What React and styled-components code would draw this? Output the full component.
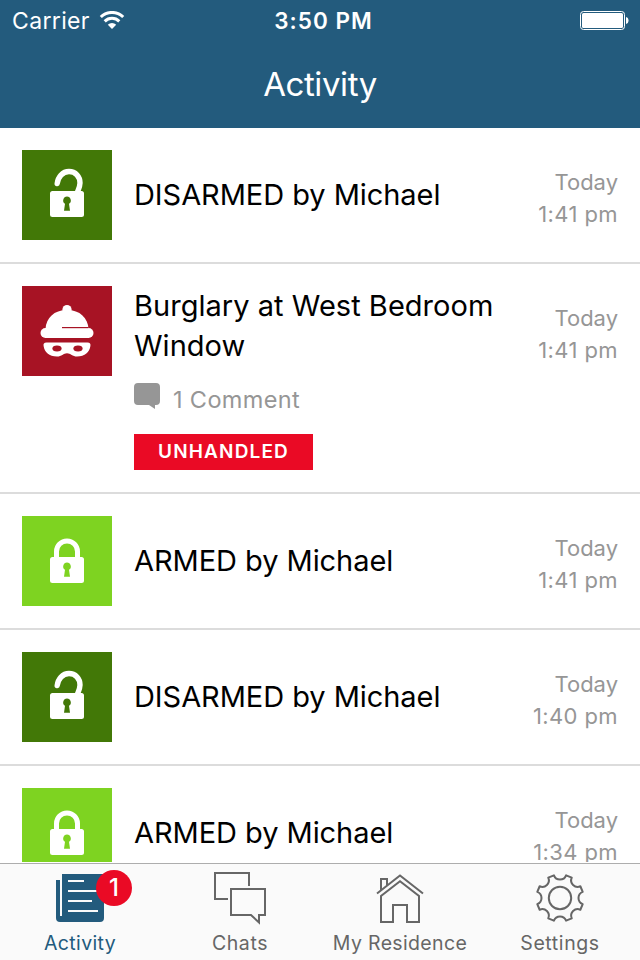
import React from 'react'
import styled, { createGlobalStyle } from 'styled-components';

const GlobalStyle = createGlobalStyle`
  * {
    box-sizing: border-box;
  }

  body {
    margin: 0;
    font-family: Inter, "Liberation Sans", sans-serif;
    background-color: #fff;
  }
`;

export const Screen = styled.div`
  display: flex;
  flex-direction: column;
  width: 640px;
  height: 960px;
  overflow: hidden;
`;

export const Header = styled.header`
  flex: none;
  height: 128px;
  background-color: #235b7d;
  color: #fff;
`;

export const StatusBar = styled.div`
  display: grid;
  grid-template-columns: 1fr auto 1fr;
  align-items: center;
  height: 40px;
  padding: 0 11px 0 12px;
`;

export const Carrier = styled.div`
  display: flex;
  align-items: center;
  gap: 9px;
  padding-top: 1px;
  font-size: 23px;
  letter-spacing: 0.35px;
`;

export const Clock = styled.div`
  padding-left: 6px;
  font-size: 22.5px;
  font-weight: 600;
  letter-spacing: 1px;
`;

export const Battery = styled.svg`
  justify-self: end;
`;

export const Title = styled.h1`
  margin: 0;
  font-size: 33px;
  line-height: 88px;
  font-weight: 400;
  letter-spacing: -0.4px;
  text-align: center;
`;

export const ActivityList = styled.ul`
  flex: 1;
  min-height: 0;
  margin: 0 0 1px;
  padding: 0;
  overflow: hidden;
  list-style: none;
`;

export const Row = styled.li`
  display: flex;
  align-items: flex-start;
  padding: 22px;
  border-bottom: 2px solid #dcdcdc;
`;

export const Tile = styled.div`
  flex: none;
  width: 90px;
  height: 90px;
  background-color: ${(props) => props.$color};

  svg {
    display: block;
  }
`;

export const RowBody = styled.div`
  flex: 1;
  display: flex;
  flex-direction: column;
  justify-content: center;
  align-items: flex-start;
  min-height: 90px;
  padding-left: 22px;
`;

export const RowTitle = styled.div`
  font-size: 29px;
  line-height: 40px;
  letter-spacing: ${(props) => (props.$wrapped ? '0.03px' : '-0.06px')};
  color: #000;
`;

export const Comments = styled.div`
  display: flex;
  align-items: flex-start;
  gap: 13px;
  margin-top: 17px;
  font-size: 23.5px;
  line-height: 34px;
  letter-spacing: 0.35px;
  color: #969696;
`;

export const StateLabel = styled.div`
  width: 179px;
  height: 36px;
  margin-top: 17px;
  background-color: #ea0a25;
  color: #fff;
  font-size: 19px;
  font-weight: 600;
  line-height: 35px;
  letter-spacing: 1.15px;
  text-align: center;
`;

export const Time = styled.div`
  flex: none;
  padding-top: 16px;
  font-size: 22px;
  line-height: 32px;
  letter-spacing: 0.4px;
  text-align: right;
  color: #969696;
`;

export const Day = styled.div`
  letter-spacing: 0;
`;

export const TabBar = styled.nav`
  flex: none;
  display: grid;
  grid-template-columns: repeat(4, 1fr);
  height: 97px;
  border-top: 1px solid #adadad;
  background-color: #fafafa;
`;

export const Tab = styled.div`
  display: flex;
  flex-direction: column;
  align-items: center;
  padding-top: 4px;
  font-size: 19.5px;
  line-height: 26px;
  letter-spacing: ${(props) => props.$spacing || '0.6px'};
  color: ${(props) => (props.$active ? '#235b7d' : '#666')};
`;

export const TabIcon = styled.div`
  position: relative;
  height: 62px;

  svg {
    display: block;
  }
`;

export const Badge = styled.span`
  position: absolute;
  top: 2px;
  left: 46px;
  width: 36px;
  height: 36px;
  border-radius: 50%;
  background-color: #ea0a25;
  color: #fff;
  font-size: 24px;
  font-weight: 500;
  line-height: 36px;
  letter-spacing: 0;
  text-align: center;
`;

const Keyhole = ({ color }) => (
  <path fill={color} d="M45 46.6a3.9 3.9 0 0 1 2 7.2l1 6.9h-6l1-6.9a3.9 3.9 0 0 1 2-7.2z" />
);

const LockOpen = ({ color }) => (
  <svg width="90" height="90" viewBox="0 0 90 90">
    <rect x="28" y="41" width="34" height="26" rx="2.5" fill="#fff" />
    <path
      d="M35.2 33.5C36 27 40.5 21.5 47 21.5c6.5 0 11 5 11 11.5 0 4-1.5 6.5-3 10"
      fill="none"
      stroke="#fff"
      strokeWidth="5.4"
      strokeLinecap="round"
    />
    <Keyhole color={color} />
  </svg>
);

const LockClosed = ({ color }) => (
  <svg width="90" height="90" viewBox="0 0 90 90">
    <rect x="28" y="41" width="34" height="26" rx="2.5" fill="#fff" />
    <path d="M34.5 43v-7.5a10.5 10.5 0 0 1 21 0V43" fill="none" stroke="#fff" strokeWidth="5" />
    <Keyhole color={color} />
  </svg>
);

const Burglar = ({ color }) => (
  <svg width="90" height="90" viewBox="0 0 90 90">
    <circle cx="45" cy="23.5" r="4.6" fill="#fff" />
    <path d="M23.5 43C24 32 32 24 45 24s21 8 21.5 19z" fill="#fff" />
    <rect x="18.5" y="42" width="53" height="10" rx="5" fill="#fff" />
    <path d="M40 41.6h26.5" stroke={color} strokeWidth="1.2" />
    <path
      d="M24.5 56.5h41c2.5 0 3.3 1.5 2.9 3.5-.9 6-5.4 10.5-13.4 10.5-4.5 0-6.500-3.300-10-3.300s-5.500 3.300-10 3.300c-8 0-12.500-4.500-13.400-10.500-.4-2 .4-3.500 2.900-3.500z"
      fill="#fff"
    />
    <ellipse cx="35" cy="62.5" rx="4.600" ry="2.900" fill={color} />
    <ellipse cx="56" cy="62.5" rx="4.600" ry="2.900" fill={color} />
  </svg>
);

const tiles = {
  disarmed: { color: '#427807', Icon: LockOpen },
  armed: { color: '#7ed321', Icon: LockClosed },
  burglary: { color: '#a71324', Icon: Burglar },
};

const WifiIcon = () => (
  <svg width="26" height="19" viewBox="0 0 26 19">
    <g fill="none" stroke="#fff" strokeWidth="3">
      <path d="M1.8 6a16 16 0 0 1 22.4 0" />
      <path d="M5.7 10.3a10.5 10.5 0 0 1 14.6 0" />
    </g>
    <path d="M8.8 13.7a6 6 0 0 1 8.4 0L13 18z" fill="#fff" />
  </svg>
);

const BatteryIcon = () => (
  <Battery width="50" height="20" viewBox="0 0 50 20">
    <rect x="1.5" y="1.5" width="44" height="18" rx="3" fill="none" stroke="#fff" />
    <rect x="3" y="3" width="41" height="15" rx="1.5" fill="#fff" />
    <path d="M47 7c1.500.3 2.500 1.500 2.500 3.500s-1 3.200-2.500 3.500z" fill="#fff" />
  </Battery>
);

const CommentIcon = () => (
  <svg width="26" height="26" viewBox="0 0 26 26">
    <path
      d="M4 0h18a4 4 0 0 1 4 4v14a4 4 0 0 1-4 4h-1v4l-6-4H4a4 4 0 0 1-4-4V4a4 4 0 0 1 4-4z"
      fill="#969696"
    />
  </svg>
);

const ActivityIcon = () => (
  <svg width="60" height="60" viewBox="0 0 60 60">
    <path d="M12 6h42v44a4 4 0 0 1-4 4H10a4 4 0 0 1-4-4V12h4v36h2z" fill="#235b7d" />
    <path d="M18 13h16M18 23h30M18 33h24M18 43h30" stroke="#fafafa" strokeWidth="2" />
  </svg>
);

const ChatsIcon = () => (
  <svg width="60" height="60" viewBox="0 0 60 60" fill="none" stroke="#666" strokeWidth="2">
    <path d="M18 31H5V5h34v13" />
    <path d="M21 21h34v26h-6v7.5L41 47H21z" />
  </svg>
);

const HomeIcon = () => (
  <svg width="60" height="60" viewBox="0 0 60 60" fill="none" stroke="#666" strokeWidth="2">
    <path d="M7 25.5L30 7.5l23 18" />
    <path d="M11 54V28l19-14.8L49 28v26H37V37H23v17z" />
    <path d="M11 22V11h6v6.5" />
  </svg>
);

// Eight teeth, one every 45 degrees, with a round notch cut between them.
const point = (radius, degrees) => {
  const a = (degrees * Math.PI) / 180;
  return `${(30 + radius * Math.sin(a)).toFixed(2)} ${(30 - radius * Math.cos(a)).toFixed(2)}`;
};

const gearPath = [0, 45, 90, 135, 180, 225, 270, 315]
  .map((a, i) => `${i ? 'L' : 'M'}${point(23.5, a - 15)}A6.5 6.5 0 0 0 ${point(23.5, a + 15)}`)
  .join('');

const SettingsIcon = () => (
  <svg width="60" height="60" viewBox="0 0 60 60" fill="none" stroke="#666" strokeWidth="2">
    <path d={`${gearPath}Z`} strokeLinejoin="round" />
    <circle cx="30" cy="30" r="11.2" />
  </svg>
);

const events = [
  { type: 'disarmed', title: ['DISARMED by Michael'], time: '1:41 pm' },
  {
    type: 'burglary',
    title: ['Burglary at West Bedroom', 'Window'],
    time: '1:41 pm',
    comments: '1 Comment',
    state: 'UNHANDLED',
  },
  { type: 'armed', title: ['ARMED by Michael'], time: '1:41 pm' },
  { type: 'disarmed', title: ['DISARMED by Michael'], time: '1:40 pm' },
  { type: 'armed', title: ['ARMED by Michael'], time: '1:34 pm' },
];

const tabs = [
  { name: 'Activity', Icon: ActivityIcon, active: true, badge: 1, spacing: '0.35px' },
  { name: 'Chats', Icon: ChatsIcon },
  { name: 'My Residence', Icon: HomeIcon, spacing: '0.35px' },
  { name: 'Settings', Icon: SettingsIcon },
];

function EventRow({ event }) {
  const { color, Icon } = tiles[event.type];

  return (
    <Row>
      <Tile $color={color}>
        <Icon color={color} />
      </Tile>
      <RowBody>
        {event.title.map((line) => (
          <RowTitle key={line} $wrapped={event.title.length > 1}>{line}</RowTitle>
        ))}
        {event.comments && (
          <Comments>
            <CommentIcon />
            {event.comments}
          </Comments>
        )}
        {event.state && <StateLabel>{event.state}</StateLabel>}
      </RowBody>
      <Time>
        <Day>Today</Day>
        <div>{event.time}</div>
      </Time>
    </Row>
  );
}

function App() {
  return (
    <Screen>
      <GlobalStyle />
      <Header>
        <StatusBar>
          <Carrier>
            Carrier
            <WifiIcon />
          </Carrier>
          <Clock>3:50 PM</Clock>
          <BatteryIcon />
        </StatusBar>
        <Title>Activity</Title>
      </Header>
      <ActivityList>
        {events.map((event, index) => (
          <EventRow key={index} event={event} />
        ))}
      </ActivityList>
      <TabBar>
        {tabs.map(({ name, Icon, active, badge, spacing }) => (
          <Tab key={name} $active={active} $spacing={spacing}>
            <TabIcon>
              <Icon />
              {badge && <Badge>{badge}</Badge>}
            </TabIcon>
            {name}
          </Tab>
        ))}
      </TabBar>
    </Screen>
  )
}

export default App
